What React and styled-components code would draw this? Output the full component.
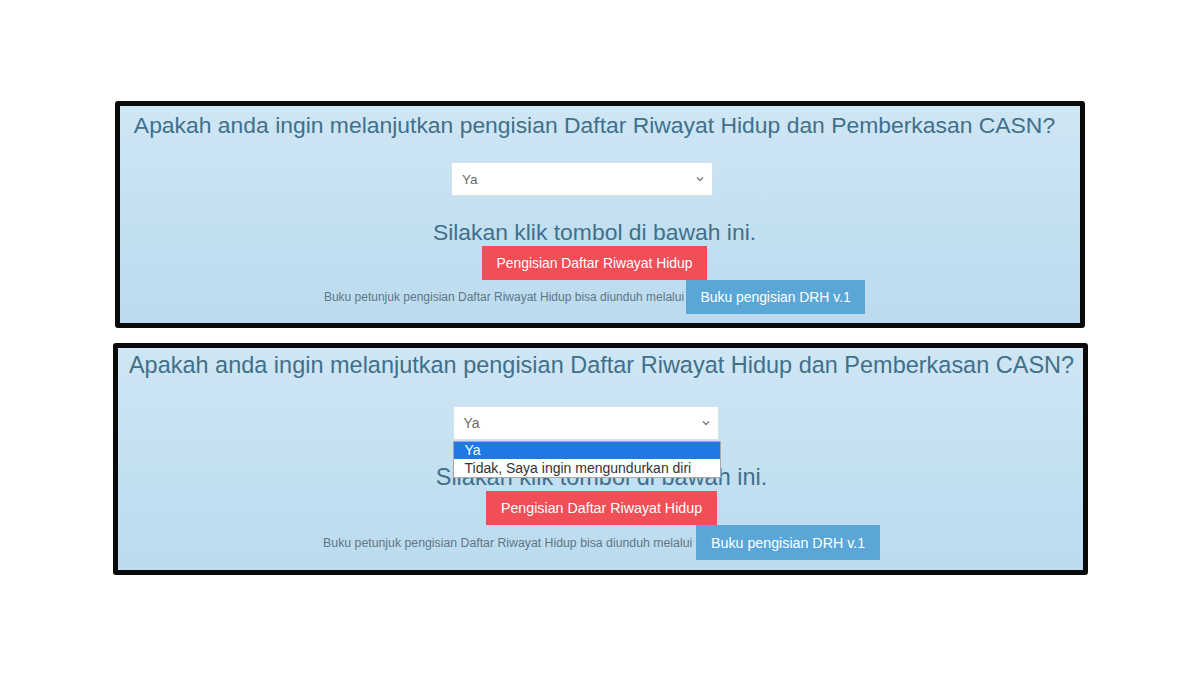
import React from "react";
import styled, { createGlobalStyle } from "styled-components";

const Global = createGlobalStyle`
  html, body { margin: 0; padding: 0; background: #ffffff; }
  body { font-family: "Liberation Sans", Arial, Helvetica, sans-serif; }
`;

const Page = styled.div`
  width: 1200px;
  height: 675px;
  padding-top: 101px;
  box-sizing: border-box;
  display: flex;
  flex-direction: column;
  align-items: center;
  gap: 15px;
  overflow: hidden;
`;

const Panel = styled.section`
  --s: ${(p) => p.$s};
  width: ${(p) => p.$w}px;
  box-sizing: border-box;
  border: 5px solid #0a0a0a;
  border-radius: 3px;
  background: linear-gradient(180deg, #cfe6f4 0%, #c3e0f1 55%, #bcdbee 100%);
  display: flex;
  flex-direction: column;
  align-items: center;
  padding: 0 ${(p) => p.$pr}px ${(p) => p.$pb}px ${(p) => p.$pl}px;
`;

const Title = styled.h2`
  margin: ${(p) => p.$mt}px 0 0;
  font-weight: 400;
  font-size: calc(22.9px * var(--s));
  line-height: calc(26px * var(--s));
  color: #41708b;
  white-space: nowrap;
`;

const SelectWrap = styled.div`
  position: relative;
  margin-top: ${(p) => p.$mt}px;
  margin-right: ${(p) => p.$mr}px;
  width: ${(p) => p.$w}px;
  height: 34px;
`;

const SelectBox = styled.div`
  box-sizing: border-box;
  width: 100%;
  height: 100%;
  background: #ffffff;
  border: 1px solid #d6e2ea;
  border-radius: 2px;
  display: flex;
  align-items: center;
  justify-content: space-between;
  padding: 0 8px 0 ${(p) => p.$pl}px;
  font-size: calc(13.5px * var(--s));
  color: #6a6a6a;
`;

const Chevron = () => (
  <svg width="8" height="6" viewBox="0 0 8 6" aria-hidden="true">
    <path d="M1 1.5 L4 4.5 L7 1.5" fill="none" stroke="#7a7a7a" strokeWidth="1.3" />
  </svg>
);

const Dropdown = styled.ul`
  position: absolute;
  left: 0;
  top: 35px;
  width: calc(100% + 2px);
  margin: 0;
  padding: 0;
  list-style: none;
  box-sizing: border-box;
  background: #ffffff;
  border: 1px solid #a9a9a9;
  z-index: 2;
`;

const Option = styled.li`
  height: ${(p) => p.$h}px;
  line-height: ${(p) => p.$h}px;
  padding-left: 11px;
  font-size: 14px;
  color: ${(p) => (p.$active ? "#ffffff" : "#333333")};
  background: ${(p) => (p.$active ? "#1e78e6" : "#ffffff")};
  white-space: nowrap;
`;

const Prompt = styled.p`
  margin: ${(p) => p.$mt}px 0 0;
  font-size: calc(22.9px * var(--s));
  line-height: calc(26px * var(--s));
  color: #41708b;
  white-space: nowrap;
`;

const Button = styled.button`
  box-sizing: border-box;
  border: none;
  border-radius: 0;
  width: calc(${(p) => p.$w}px * var(--s));
  height: ${(p) => p.$h}px;
  margin-top: ${(p) => p.$mt || 0}px;
  padding: 0;
  font-family: "Liberation Sans", Arial, Helvetica, sans-serif;
  font-size: calc(13.9px * var(--s));
  color: #ffffff;
  background: ${(p) => (p.$tone === "red" ? "#f04f58" : "#5aa7d7")};
  white-space: nowrap;
`;

const Row = styled.div`
  display: flex;
  align-items: center;
  gap: ${(p) => p.$gap}px;
`;

const Note = styled.span`
  font-size: calc(12px * var(--s));
  color: #5e7686;
  white-space: nowrap;
`;

const Card = ({ cfg, open }) => (
  <Panel $s={cfg.s} $w={cfg.w} $pl={cfg.pl} $pr={cfg.pr} $pb={cfg.pb}>
    <Title $mt={cfg.titleMt}>
      Apakah anda ingin melanjutkan pengisian Daftar Riwayat Hidup dan Pemberkasan CASN?
    </Title>
    <SelectWrap $mt={cfg.selectMt} $mr={cfg.selectMr} $w={cfg.selectW}>
      <SelectBox $pl={cfg.selectPl}>
        <span>Ya</span>
        <Chevron />
      </SelectBox>
      {open && (
        <Dropdown>
          <Option $active $h={17}>Ya</Option>
          <Option $h={18}>Tidak, Saya ingin mengundurkan diri</Option>
        </Dropdown>
      )}
    </SelectWrap>
    <Prompt $mt={cfg.promptMt}>Silakan klik tombol di bawah ini.</Prompt>
    <Button $tone="red" $w={225} $h={cfg.redH} $mt={cfg.redMt}>
      Pengisian Daftar Riwayat Hidup
    </Button>
    <Row $gap={cfg.rowGap}>
      <Note>Buku petunjuk pengisian Daftar Riwayat Hidup bisa diunduh melalui</Note>
      <Button $tone="blue" $w={179} $h={cfg.blueH}>
        Buku pengisian DRH v.1
      </Button>
    </Row>
  </Panel>
);

const first = {
  s: 1,
  w: 970,
  pl: 0,
  pr: 11,
  pb: 9,
  titleMt: 6,
  selectMt: 24,
  selectMr: 25,
  selectW: 262,
  selectPl: 10,
  promptMt: 23,
  redMt: 1,
  redH: 34,
  blueH: 34,
  rowGap: 2,
};

const second = {
  s: 1.026,
  w: 975,
  pl: 3,
  pr: 0,
  pb: 10,
  titleMt: 4,
  selectMt: 27,
  selectMr: 32,
  selectW: 266,
  selectPl: 10,
  promptMt: 24,
  redMt: 1,
  redH: 34,
  blueH: 35,
  rowGap: 4,
};

export default function App() {
  return (
    <>
      <Global />
      <Page>
        <Card cfg={first} />
        <Card cfg={second} open />
      </Page>
    </>
  );
}
